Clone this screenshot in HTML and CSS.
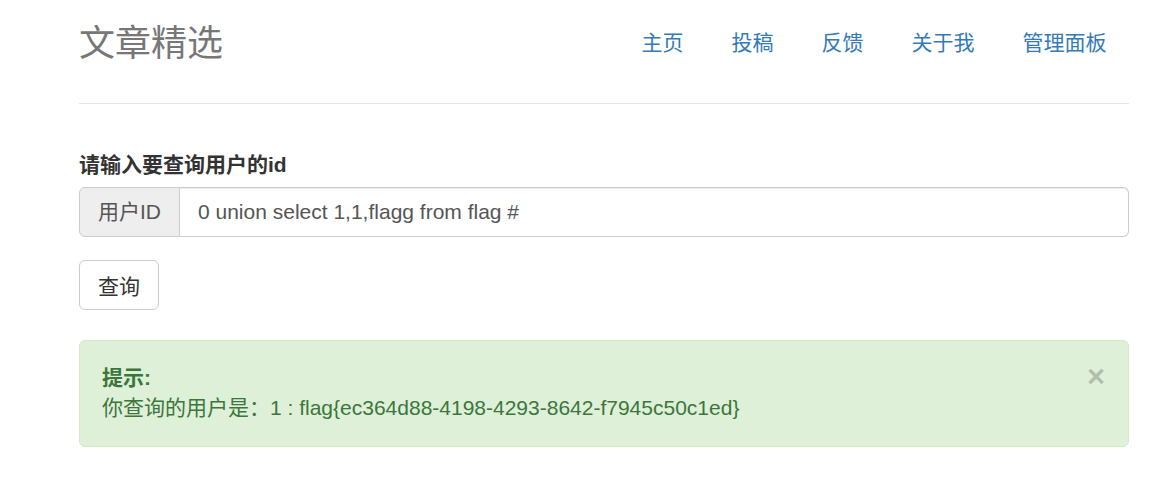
FILE: index.html
```html
<!DOCTYPE html>
<html lang="zh-CN">
<head>
<meta charset="utf-8">
<title>文章精选</title>
<link rel="stylesheet" href="styles.css">
</head>
<body>
<div class="container">
  <header class="header">
    <h3 class="brand">文章精选</h3>
    <nav class="nav">
      <a href="#">主页</a>
      <a href="#">投稿</a>
      <a href="#">反馈</a>
      <a href="#">关于我</a>
      <a href="#">管理面板</a>
    </nav>
  </header>
  <form class="form">
    <label class="label">请输入要查询用户的id</label>
    <div class="input-group">
      <span class="addon">用户ID</span>
      <input class="input" type="text" value="0 union select 1,1,flagg from flag #">
    </div>
    <button class="btn" type="button">查询</button>
  </form>
  <div class="alert">
    <span class="close">×</span>
    <strong>提示:</strong><br>
    你查询的用户是：1 : flag{ec364d88-4198-4293-8642-f7945c50c1ed}
  </div>
</div>
</body>
</html>
```
FILE: styles.css
```css
* { box-sizing: border-box; }
body {
  margin: 0;
  font-family: "Liberation Sans", "Noto Sans CJK SC", sans-serif;
  font-size: 21px;
  line-height: 30px;
  color: #333;
  background: #fff;
}
.container {
  width: 1050px;
  margin-left: 79px;
}
.header {
  display: flex;
  justify-content: space-between;
  align-items: flex-start;
  padding-top: 13px;
  padding-bottom: 30px;
  border-bottom: 1px solid #e5e5e5;
}
.brand {
  margin: 0;
  padding-top: 2px;
  height: 60px;
  font-size: 36px;
  line-height: 58px;
  font-weight: normal;
  color: #777;
}
.nav {
  display: flex;
  gap: 3px;
}
.nav a {
  display: block;
  padding: 15px 22.5px;
  line-height: 30px;
  font-size: 21px;
  color: #337ab7;
  text-decoration: none;
}
.form {
  margin-top: 46px;
}
.label {
  display: block;
  font-weight: bold;
  line-height: 30px;
  margin-bottom: 7px;
}
.input-group {
  display: flex;
  height: 50px;
  margin-bottom: 23px;
}
.addon {
  display: flex;
  align-items: center;
  padding: 0 18px;
  background: #eee;
  color: #555;
  border: 1px solid #ccc;
  border-radius: 6px 0 0 6px;
  font-size: 21px;
}
.input {
  flex: 1;
  min-width: 0;
  height: 50px;
  padding: 0 18px;
  border: 1px solid #ccc;
  border-left: 0;
  border-radius: 0 6px 6px 0;
  font-family: inherit;
  font-size: 21px;
  color: #555;
  box-shadow: inset 0 1px 1px rgba(0,0,0,.075);
  outline: none;
}
.btn {
  display: block;
  height: 50px;
  padding: 0 18px;
  background: #fff;
  border: 1px solid #ccc;
  border-radius: 6px;
  font-family: inherit;
  font-size: 21px;
  color: #333;
}
.alert {
  position: relative;
  margin-top: 30px;
  padding: 22px 52px 23px 22px;
  background: #dff0d8;
  border: 1px solid #d6e9c6;
  border-radius: 6px;
  color: #3c763d;
  line-height: 30px;
}
.close {
  position: absolute;
  right: 23px;
  top: 21px;
  font-size: 31px;
  font-weight: bold;
  line-height: 30px;
  color: #000;
  opacity: .2;
  text-shadow: 0 1px 0 #fff;
}
```
